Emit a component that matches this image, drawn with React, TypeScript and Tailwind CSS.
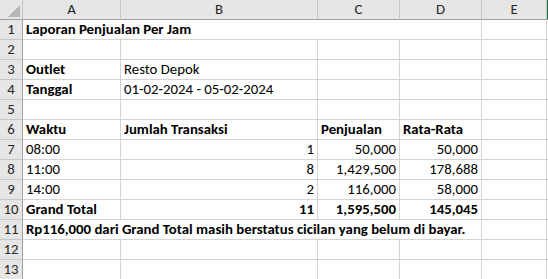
import React from "react";

type Cell = { t?: string; b?: boolean; r?: boolean; span?: number };

const rows: Cell[][] = [
  [{ t: "Laporan Penjualan Per Jam", b: true, span: 4 }, {}],
  [{}, {}, {}, {}, {}],
  [{ t: "Outlet", b: true }, { t: "Resto Depok" }, {}, {}, {}],
  [{ t: "Tanggal", b: true }, { t: "01-02-2024 - 05-02-2024" }, {}, {}, {}],
  [{}, {}, {}, {}, {}],
  [
    { t: "Waktu", b: true },
    { t: "Jumlah Transaksi", b: true },
    { t: "Penjualan", b: true },
    { t: "Rata-Rata", b: true },
    {},
  ],
  [{ t: "08:00" }, { t: "1", r: true }, { t: "50,000", r: true }, { t: "50,000", r: true }, {}],
  [{ t: "11:00" }, { t: "8", r: true }, { t: "1,429,500", r: true }, { t: "178,688", r: true }, {}],
  [{ t: "14:00" }, { t: "2", r: true }, { t: "116,000", r: true }, { t: "58,000", r: true }, {}],
  [
    { t: "Grand Total", b: true },
    { t: "11", b: true, r: true },
    { t: "1,595,500", b: true, r: true },
    { t: "145,045", b: true, r: true },
    {},
  ],
  [
    {
      t: "Rp116,000 dari Grand Total masih berstatus cicilan yang belum di bayar.",
      b: true,
      span: 4,
    },
    {},
  ],
  [{}, {}, {}, {}, {}],
  [{}, {}, {}, {}, {}],
];

const spanClass: Record<number, string> = {
  1: "col-span-1",
  4: "col-span-4",
};

export default function App() {
  return (
    <div
      className="w-[548px] h-[279px] overflow-hidden bg-white text-black"
      style={{ fontFamily: "Carlito, Calibri, Lato, 'Liberation Sans', sans-serif" }}
    >
      <div className="grid grid-cols-[23px_98px_197px_82px_82px_65px_1fr] auto-rows-[20px]">
        {/* header row */}
        <div className="relative bg-[#e6e6e6] border-r border-b border-r-[#c0c0c0] border-b-[#9e9e9e]">
          <div className="absolute right-[2px] bottom-[2px] w-0 h-0 border-l-[12px] border-l-transparent border-b-[12px] border-b-[#b4b4b4]" />
        </div>
        {["A", "B", "C", "D", "E"].map((l) => (
          <div
            key={l}
            className="bg-[#e6e6e6] border-r border-b border-r-[#c6c6c6] border-b-[#9e9e9e] flex items-end justify-center pb-[1px] text-[14.8px] leading-[17px] text-[#262626]"
          >
            {l}
          </div>
        ))}
        <div className="bg-[#e6e6e6] border-b border-b-[#9e9e9e] border-r-2 border-r-[#217346]" />
        {rows.map((row, i) => (
          <React.Fragment key={i}>
            <div className="bg-[#e6e6e6] border-r border-b border-r-[#9e9e9e] border-b-[#c6c6c6] flex items-end justify-center pb-[1px] text-[14.8px] leading-[17px] text-[#262626]">
              {i + 1}
            </div>
            {row.map((c, j) => (
              <div
                key={j}
                className={`${spanClass[c.span ?? 1]} border-r border-b border-[#d4d4d4] flex items-end px-[3px] pb-[1px] text-[14.8px] leading-[17px] whitespace-nowrap overflow-visible ${
                  c.r ? "justify-end" : "justify-start"
                } ${c.b ? "font-bold" : "font-normal"}`}
              >
                {c.t ?? ""}
              </div>
            ))}
            <div className="border-b border-[#d4d4d4]" />
          </React.Fragment>
        ))}
      </div>
    </div>
  );
}
